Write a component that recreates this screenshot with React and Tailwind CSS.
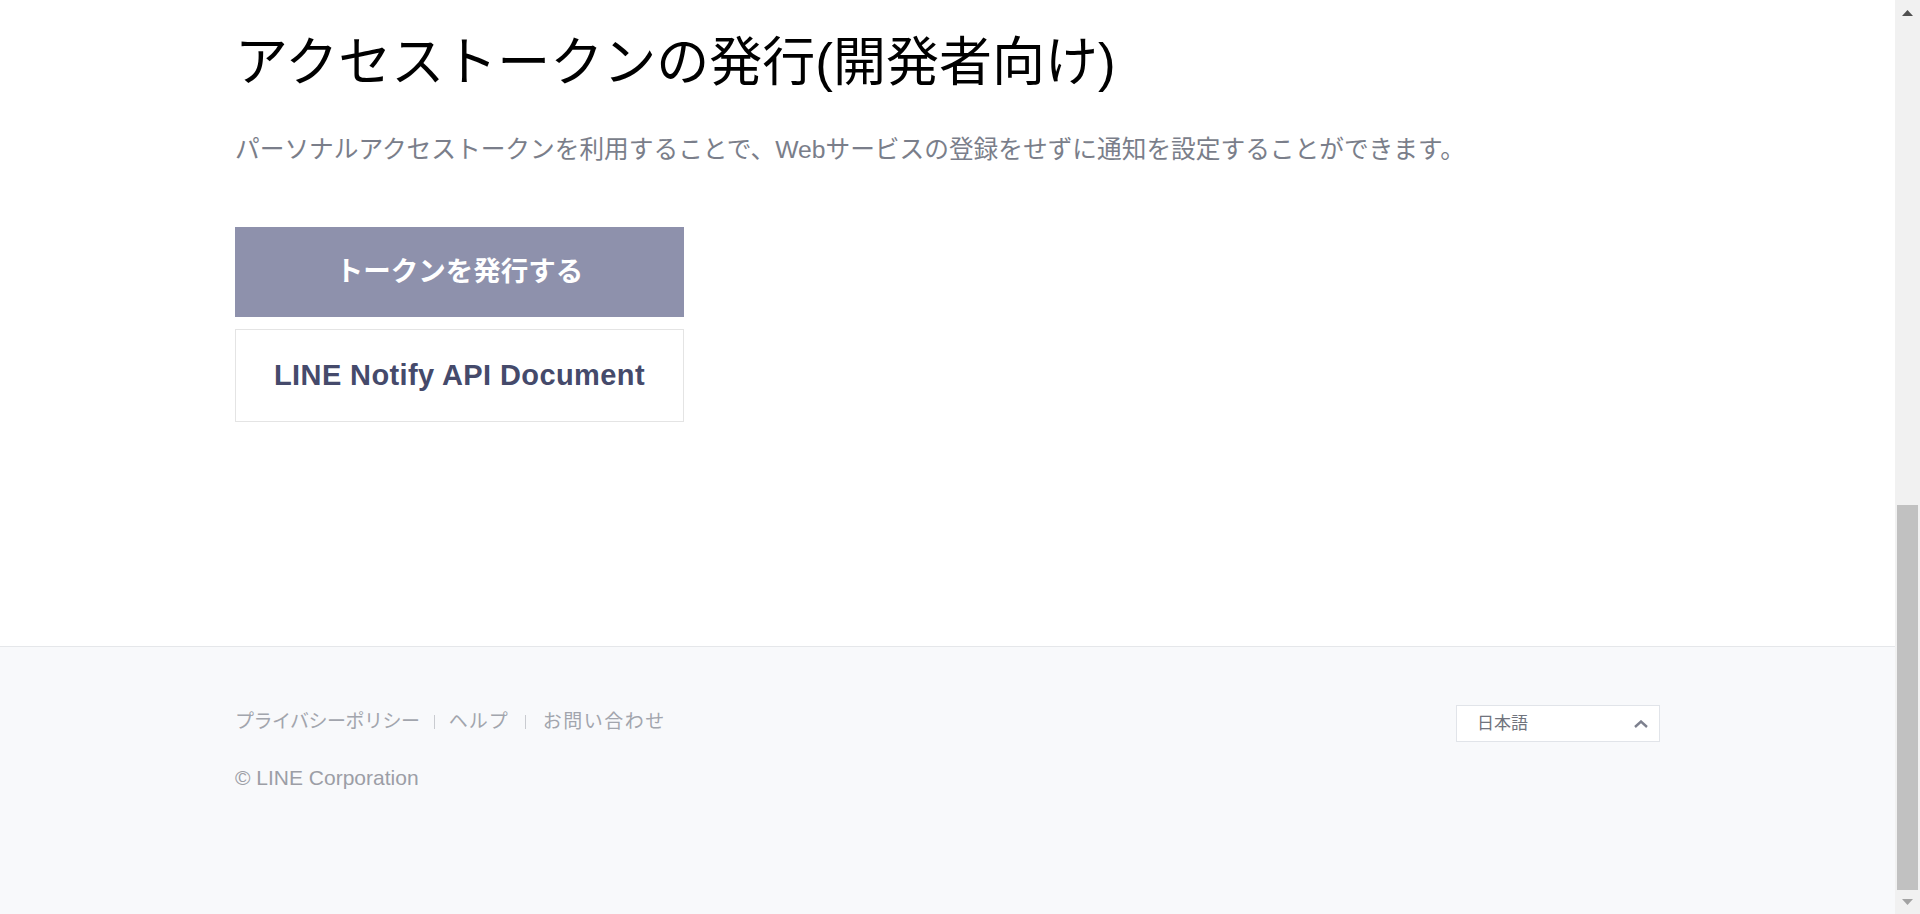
export default function App() {
  const font = { fontFamily: '"Liberation Sans", "Noto Sans CJK JP", sans-serif' };

  return (
    <div className="flex h-[914px] w-full overflow-hidden bg-white" style={font}>
      <div className="flex min-w-0 flex-1 flex-col">
        {/* main content */}
        <section className="h-[647px] shrink-0 border-b border-[#e5e7ea] bg-white">
          <div className="mx-auto w-[1425px] pt-[32px]">
            <h1 className="text-[53px] font-normal leading-[62px] text-black">
              アクセストークンの発行(開発者向け)
            </h1>
            <p className="mt-[38px] text-[24.7px] leading-[36px] text-[#7a7e8a]">
              パーソナルアクセストークンを利用することで、Webサービスの登録をせずに通知を設定することができます。
            </p>

            <div className="mt-[59px] flex w-[449px] flex-col gap-[12px]">
              <button
                type="button"
                className="flex h-[90px] items-center justify-center bg-[#8e91ac] text-[27.5px] font-bold text-white"
              >
                トークンを発行する
              </button>
              <button
                type="button"
                className="flex h-[93px] items-center justify-center border border-[#e4e4e4] bg-white text-[29px] font-bold tracking-[0.4px] text-[#454a6b]"
              >
                LINE Notify API Document
              </button>
            </div>
          </div>
        </section>

        {/* footer */}
        <footer className="flex-1 bg-[#f8f9fb]">
          <div className="mx-auto flex w-[1425px] items-start justify-between pt-[58px]">
            <div className="pt-[3px]">
              <div className="flex items-center text-[19px] leading-[28px] text-[#a2a5ad]">
                <span className="tracking-[-0.5px]">プライバシーポリシー</span>
                <span className="mx-[14px] h-[14px] w-px bg-[#c9cbd0]" />
                <span className="tracking-[1px]">ヘルプ</span>
                <span className="ml-[16px] mr-[17px] h-[14px] w-px bg-[#c9cbd0]" />
                <span className="tracking-[1.5px]">お問い合わせ</span>
              </div>
              <p className="mt-[28px] text-[21px] leading-[28px] text-[#9c9ea6]">
                © LINE Corporation
              </p>
            </div>

            <div className="flex h-[37px] w-[204px] items-center justify-between border border-[#e1e4e9] bg-white pl-[20px] pr-[11px]">
              <span className="text-[17px] text-[#70737d]">日本語</span>
              <svg width="14" height="8" viewBox="0 0 14 8" fill="none">
                <path d="M1 7 L7 1.5 L13 7" stroke="#7d808e" strokeWidth="2.4" />
              </svg>
            </div>
          </div>
        </footer>
      </div>

      {/* browser scrollbar */}
      <div className="flex w-[25px] shrink-0 flex-col bg-[#f1f1f1]">
        <div className="flex h-[25px] items-center justify-center">
          <svg width="11" height="6" viewBox="0 0 11 6">
            <polygon points="5.5,0 11,6 0,6" fill="#505050" />
          </svg>
        </div>
        <div className="flex-1" />
        <div className="mx-[2px] h-[385px] bg-[#c1c1c1]" />
        <div className="flex h-[24px] items-center justify-center">
          <svg width="11" height="6" viewBox="0 0 11 6">
            <polygon points="0,0 11,0 5.5,6" fill="#a3a3a3" />
          </svg>
        </div>
      </div>
    </div>
  );
}
